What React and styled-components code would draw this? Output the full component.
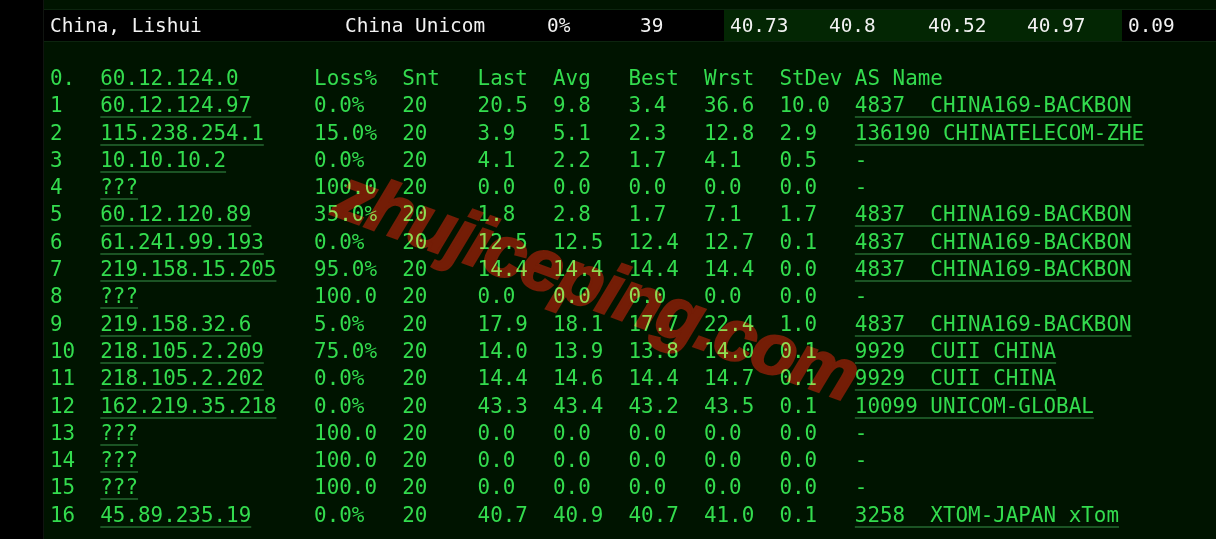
import React from "react";
import styled, { createGlobalStyle } from "styled-components";

// DATA
const summary = [
    { text: "China, Lishui", width: 295, tone: "dark" },
    { text: "China Unicom", width: 202, tone: "dark" },
    { text: "0%", width: 93, tone: "dark" },
    { text: "39", width: 90, tone: "dark" },
    { text: "40.73", width: 99, tone: "green" },
    { text: "40.8", width: 99, tone: "green" },
    { text: "40.52", width: 99, tone: "green" },
    { text: "40.97", width: 101, tone: "green" },
    { text: "0.09", width: 0, tone: "dark" },
];

const hops = [
    ["1", "60.12.124.97", "0.0%", "20", "20.5", "9.8", "3.4", "36.6", "10.0", "4837  CHINA169-BACKBON"],
    ["2", "115.238.254.1", "15.0%", "20", "3.9", "5.1", "2.3", "12.8", "2.9", "136190 CHINATELECOM-ZHE"],
    ["3", "10.10.10.2", "0.0%", "20", "4.1", "2.2", "1.7", "4.1", "0.5", "-"],
    ["4", "???", "100.0", "20", "0.0", "0.0", "0.0", "0.0", "0.0", "-"],
    ["5", "60.12.120.89", "35.0%", "20", "1.8", "2.8", "1.7", "7.1", "1.7", "4837  CHINA169-BACKBON"],
    ["6", "61.241.99.193", "0.0%", "20", "12.5", "12.5", "12.4", "12.7", "0.1", "4837  CHINA169-BACKBON"],
    ["7", "219.158.15.205", "95.0%", "20", "14.4", "14.4", "14.4", "14.4", "0.0", "4837  CHINA169-BACKBON"],
    ["8", "???", "100.0", "20", "0.0", "0.0", "0.0", "0.0", "0.0", "-"],
    ["9", "219.158.32.6", "5.0%", "20", "17.9", "18.1", "17.7", "22.4", "1.0", "4837  CHINA169-BACKBON"],
    ["10", "218.105.2.209", "75.0%", "20", "14.0", "13.9", "13.8", "14.0", "0.1", "9929  CUII CHINA"],
    ["11", "218.105.2.202", "0.0%", "20", "14.4", "14.6", "14.4", "14.7", "0.1", "9929  CUII CHINA"],
    ["12", "162.219.35.218", "0.0%", "20", "43.3", "43.4", "43.2", "43.5", "0.1", "10099 UNICOM-GLOBAL"],
    ["13", "???", "100.0", "20", "0.0", "0.0", "0.0", "0.0", "0.0", "-"],
    ["14", "???", "100.0", "20", "0.0", "0.0", "0.0", "0.0", "0.0", "-"],
    ["15", "???", "100.0", "20", "0.0", "0.0", "0.0", "0.0", "0.0", "-"],
    ["16", "45.89.235.19", "0.0%", "20", "40.7", "40.9", "40.7", "41.0", "0.1", "3258  XTOM-JAPAN xTom"],
];

const header = ["0.", "60.12.124.0", "Loss%", "Snt", "Last", "Avg", "Best", "Wrst", "StDev", "AS Name"];

function App() {
    return (
        <>
            <GlobalStyle />
            <Page>
                <LeftRail />
                <Main>
                    <TopGap />
                    <Summary>
                        {summary.map((cell, index) => (
                            <SummaryCell key={index} $tone={cell.tone} $width={cell.width}>
                                {cell.text}
                            </SummaryCell>
                        ))}
                    </Summary>

                    <Table>
                        <Row>
                            {header.map((col, index) => (
                                <Cell key={index} $link={index === 1}>
                                    {col}
                                </Cell>
                            ))}
                        </Row>
                        {hops.map((hop, index) => (
                            <Row key={index}>
                                {hop.map((col, i) => (
                                    <Cell key={i} $link={i === 1 || (i === 9 && col !== "-")}>
                                        {col}
                                    </Cell>
                                ))}
                            </Row>
                        ))}
                    </Table>
                </Main>
                <Watermark>zhujiceping.com</Watermark>
            </Page>
        </>
    );
}

export default App;

const GlobalStyle = createGlobalStyle`
    * {
        box-sizing: border-box;
    }

    body {
        margin: 0;
        background: #000;
    }
`;

const Page = styled.div`
    position: relative;
    display: flex;
    width: 1216px;
    height: 539px;
    overflow: hidden;
    font-family: "DejaVu Sans Mono", "Liberation Mono", monospace;
`;

const LeftRail = styled.div`
    width: 44px;
    flex-shrink: 0;
    background: #000;
    border-right: 1px solid #101410;
`;

const Main = styled.div`
    flex: 1;
    background: #001400;
    display: flex;
    flex-direction: column;
`;

const TopGap = styled.div`
    height: 9px;
`;

const Summary = styled.div`
    display: flex;
    height: 33px;
    border-top: 1px solid #0c240e;
    border-bottom: 1px solid #0c240e;
`;

const SummaryCell = styled.div`
    display: flex;
    align-items: center;
    padding-left: 6px;
    width: ${({ $width }) => ($width ? `${$width}px` : "auto")};
    flex: ${({ $width }) => ($width ? "none" : "1")};
    background: ${({ $tone }) => ($tone === "green" ? "#032603" : "#000")};
    color: #f2f2f2;
    font-size: 19.4px;
    white-space: pre;
`;

const Table = styled.div`
    padding: 23px 0 0 6px;
    font-size: 20.9px;
    line-height: 27.3px;
    color: #33dc4e;
`;

const Row = styled.div`
    display: grid;
    grid-template-columns: 4ch 17ch 7ch 6ch 6ch 6ch 6ch 6ch 6ch auto;
    height: 27.3px;
`;

const Cell = styled.span`
    white-space: pre;
    text-decoration: ${({ $link }) => ($link ? "underline" : "none")};
    text-decoration-color: #1b5424;
    text-decoration-thickness: 2px;
    text-underline-offset: 4px;
    justify-self: start;
`;

const Watermark = styled.div`
    position: absolute;
    left: 597px;
    top: 284px;
    transform: translate(-50%, -50%) rotate(20deg);
    font-family: "Liberation Sans", Arial, sans-serif;
    font-weight: 700;
    font-style: italic;
    font-size: 73px;
    letter-spacing: -1.5px;
    color: #740a06;
    -webkit-text-stroke: 2.5px #740a06;
    mix-blend-mode: screen;
    white-space: nowrap;
    pointer-events: none;
`;
